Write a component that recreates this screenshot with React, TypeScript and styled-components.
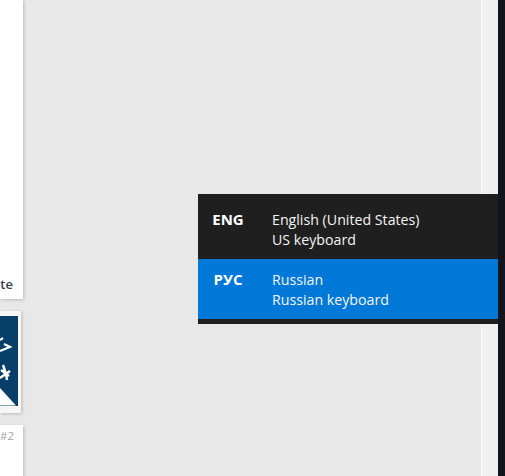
import React from "react";
import styled, { createGlobalStyle } from "styled-components";

const Global = createGlobalStyle`
  html, body { margin: 0; padding: 0; width: 505px; height: 476px; overflow: hidden; background: #e8e8e8; }
  #root { width: 505px; height: 476px; }
`;

const Screen = styled.div`
  position: relative;
  width: 505px;
  height: 476px;
  overflow: hidden;
  display: grid;
  grid-template-columns: 24px 457px 1px 16px 7px;
  font-family: "Open Sans", "Noto Sans", sans-serif;
`;

const Rail = styled.div`
  display: flex;
  flex-direction: column;
  align-items: flex-start;
  background: #e8e8e8;
`;

const Card = styled.div<{ $w: number; $h: number; $gap: number }>`
  width: ${(p) => p.$w}px;
  height: ${(p) => p.$h}px;
  margin-bottom: ${(p) => p.$gap}px;
  flex: none;
  background: #fff;
  box-shadow: 1px 1px 3px rgba(0, 0, 0, 0.2);
  overflow: hidden;
  position: relative;
`;

const NoteText = styled.div`
  height: 100%;
  display: flex;
  align-items: flex-end;
  justify-content: flex-end;
  padding: 0 10px 7px 0;
  box-sizing: border-box;
  font-size: 13px;
  font-weight: 600;
  color: #3a3a4a;
  line-height: 16px;
`;

const ThumbCard = styled(Card)`
  background: #f6f6f6;
  padding: 5px 3px 7px 0;
  box-sizing: border-box;
`;

const NumText = styled.div`
  padding: 3px 10px 0 0;
  text-align: right;
  font-size: 11.5px;
  line-height: 16px;
  color: #a4a4a4;
`;

const Main = styled.div`
  background: #e8e8e8;
`;
const Divider = styled.div`
  background: #fbfbfb;
`;
const Gutter = styled.div`
  background: #f0f0f0;
`;
const Edge = styled.div`
  background: #12161c;
`;

const Flyout = styled.div`
  position: absolute;
  left: 198px;
  top: 194px;
  width: 300px;
  padding-bottom: 5px;
  background: #1f1f1f;
  color: #fff;
`;

const Row = styled.div<{ $active?: boolean; $h: number; $pad: number }>`
  display: grid;
  grid-template-columns: 74px 1fr;
  height: ${(p) => p.$h}px;
  padding-top: ${(p) => p.$pad}px;
  box-sizing: border-box;
  background: ${(p) => (p.$active ? "#0078d7" : "transparent")};
`;

const Code = styled.div`
  font-size: 15px;
  font-weight: 700;
  line-height: 20px;
  text-align: center;
  width: 60px;
  margin-top: -1px;
`;

const Lines = styled.div`
  font-size: 14.2px;
  line-height: 20px;
  color: #f4f4f4;
`;

function Thumb() {
  return (
    <svg width="18" height="90" viewBox="0 0 18 90" style={{ display: "block" }}>
      <rect width="18" height="90" fill="#073f68" />
      <path d="M0 72 L16 89.5 L0 89.5 Z" fill="#fff" />
      <path d="M0 24 L3 22 M4 28 L10 31 L0 35" fill="none" stroke="#fff" strokeWidth="2.2" />
      <path d="M3 49 L6 58 M10 55 L0 62 M1 54 L9 60 M6 58 L7 64" fill="none" stroke="#fff" strokeWidth="2.4" />
    </svg>
  );
}

export default function App() {
  return (
    <Screen>
      <Global />
      <Rail>
        <Card $w={23} $h={299} $gap={12}>
          <NoteText>te</NoteText>
        </Card>
        <ThumbCard $w={21} $h={102} $gap={12}>
          <Thumb />
        </ThumbCard>
        <Card $w={23} $h={60} $gap={0}>
          <NumText>#2</NumText>
        </Card>
      </Rail>
      <Main />
      <Divider />
      <Gutter />
      <Edge />
      <Flyout>
        <Row $h={65} $pad={16}>
          <Code>ENG</Code>
          <Lines>
            English (United States)
            <br />
            US keyboard
          </Lines>
        </Row>
        <Row $active $h={60} $pad={11}>
          <Code>РУС</Code>
          <Lines>
            Russian
            <br />
            Russian keyboard
          </Lines>
        </Row>
      </Flyout>
    </Screen>
  );
}
